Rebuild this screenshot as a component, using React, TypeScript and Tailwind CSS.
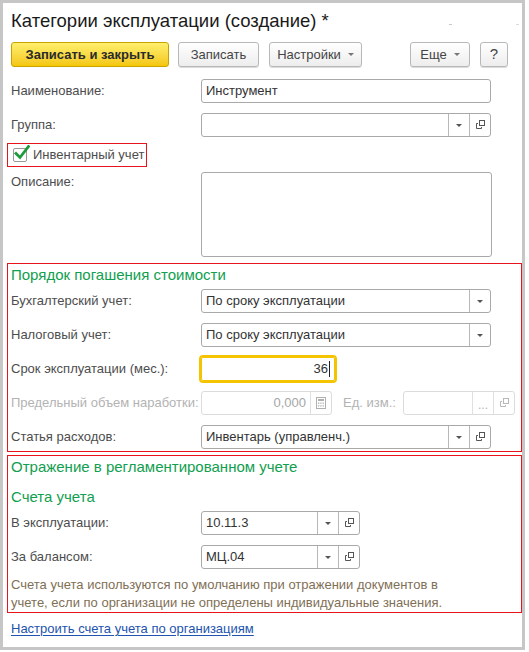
import React from 'react';

const FONT = { fontFamily: '"Liberation Sans", Arial, sans-serif' };

const Arrow = ({ color = '#555' }: { color?: string }) => (
  <svg width="6" height="3" viewBox="0 0 6 3">
    <path d="M0 0 H6 L3 3 Z" fill={color} />
  </svg>
);

const OpenIcon = ({ color = '#555' }: { color?: string }) => (
  <svg width="12" height="12" viewBox="0 0 12 12" fill="none" stroke={color} strokeWidth="1">
    <rect x="5.5" y="1.5" width="5" height="5" />
    <path d="M4 4.5 H2.5 V9.5 H7.5 V8" />
  </svg>
);

const CalcIcon = () => (
  <svg width="10" height="12" viewBox="0 0 10 12" fill="none">
    <rect x="0.5" y="0.5" width="9" height="11" stroke="#b0b0b0" />
    <rect x="2" y="2" width="6" height="2" fill="#b0b0b0" />
    <rect x="2" y="5.5" width="1.3" height="1.3" fill="#b0b0b0" />
    <rect x="4.3" y="5.5" width="1.3" height="1.3" fill="#b0b0b0" />
    <rect x="6.6" y="5.5" width="1.3" height="1.3" fill="#b0b0b0" />
    <rect x="2" y="8.2" width="1.3" height="1.3" fill="#b0b0b0" />
    <rect x="4.3" y="8.2" width="1.3" height="1.3" fill="#b0b0b0" />
    <rect x="6.6" y="8.2" width="1.3" height="1.3" fill="#b0b0b0" />
  </svg>
);

const Label = ({ children, muted = false, w = 'w-[190px]' }: { children: React.ReactNode; muted?: boolean; w?: string }) => (
  <div className={`${w} shrink-0 text-[13px] leading-[16px] ${muted ? 'text-[#b3b3b3]' : 'text-[#4d4d4d]'}`}>{children}</div>
);

const BtnCell = ({ children, disabled = false }: { children: React.ReactNode; disabled?: boolean }) => (
  <div className={`w-[21px] h-full shrink-0 flex items-center justify-center border-l ${disabled ? 'border-[#e0e0e0]' : 'border-[#b8b8b8]'}`}>
    {children}
  </div>
);

const Field = ({
  w,
  value = '',
  dropdown = false,
  open = false,
  disabled = false,
  right = false,
  extra,
}: {
  w: string;
  value?: string;
  dropdown?: boolean;
  open?: boolean;
  disabled?: boolean;
  right?: boolean;
  extra?: React.ReactNode;
}) => (
  <div
    className={`${w} h-[24px] flex items-stretch rounded-[3px] border bg-white ${
      disabled ? 'border-[#dcdcdc]' : 'border-[#a9a9a9]'
    }`}
  >
    <div
      className={`flex-1 flex items-center px-[4px] text-[13px] ${right ? 'justify-end' : ''} ${
        disabled ? 'text-[#a6a6a6]' : 'text-[#333]'
      }`}
    >
      {value}
    </div>
    {extra}
    {dropdown && (
      <BtnCell>
        <Arrow />
      </BtnCell>
    )}
    {open && (
      <BtnCell disabled={disabled}>
        <OpenIcon color={disabled ? '#b8b8b8' : '#555'} />
      </BtnCell>
    )}
  </div>
);

const Row = ({ children, className = '' }: { children: React.ReactNode; className?: string }) => (
  <div className={`flex items-center ${className}`}>{children}</div>
);

const Heading = ({ children, className = '' }: { children: React.ReactNode; className?: string }) => (
  <div className={`text-[15px] leading-[18px] text-[#11a04f] ${className}`}>{children}</div>
);

const GrayButton = ({ children, w, className = '' }: { children: React.ReactNode; w: string; className?: string }) => (
  <button
    className={`${w} h-[25px] shrink-0 flex items-center justify-center gap-[7px] rounded-[3px] border border-[#b8b8b8] bg-linear-to-b from-white to-[#ededed] text-[13px] text-[#444] shadow-[0_1px_0_#dcdcdc] ${className}`}
  >
    {children}
  </button>
);

export default function App() {
  return (
    <div className="w-[529px] h-[652px] bg-white" style={FONT}>
      <div className="w-[525px] h-[650px] border-[3px] border-[#c6c6c6] bg-white flex flex-col">
        {/* Title */}
        <div className="h-[39px] pt-[7px] pl-[8px] flex items-start">
          <div className="text-[18.5px] leading-[22px] text-[#1a1a1a]">Категории эксплуатации (создание) *</div>
          <div className="ml-[120px] mt-[14px] w-[3px] h-[1px] bg-[#c8c8c8]" />
          <div className="ml-[64px] mt-[14px] w-[3px] h-[1px] bg-[#dadada]" />
        </div>

        {/* Toolbar */}
        <div className="h-[25px] pl-[8px] flex items-center">
          <button className="w-[158px] h-[25px] shrink-0 rounded-[3px] border border-[#c9a400] bg-linear-to-b from-[#fff06a] to-[#f4c600] text-[13px] font-bold text-[#2b2b2b]">
            Записать и закрыть
          </button>
          <GrayButton w="w-[81px]" className="ml-[9px]">
            Записать
          </GrayButton>
          <GrayButton w="w-[93px]" className="ml-[10px]">
            Настройки <Arrow color="#777" />
          </GrayButton>
          <div className="flex-1" />
          <GrayButton w="w-[60px]">
            Еще <Arrow color="#777" />
          </GrayButton>
          <GrayButton w="w-[28px]" className="ml-[10px] mr-[14px] text-[15px] text-[#333]">
            ?
          </GrayButton>
        </div>

        {/* Main fields */}
        <div className="pl-[8px]">
          <Row className="mt-[12px]">
            <Label>Наименование:</Label>
            <Field w="w-[290px]" value="Инструмент" />
          </Row>
          <Row className="mt-[10px]">
            <Label>Группа:</Label>
            <Field w="w-[290px]" dropdown open />
          </Row>
        </div>

        <div className="mt-[6px] ml-[4px] w-[140px] h-[24px] border border-[#e8141c] flex items-center pl-[5px]">
          <div className="relative w-[14px] h-[14px] border border-[#9a9a9a] rounded-[2px] bg-white shrink-0">
            <svg className="absolute -top-[4px] left-[0px]" width="16" height="16" viewBox="0 0 16 16" fill="none">
              <path d="M2 8.5 L6 12.5 L14.5 1.5" stroke="#1c9a3c" strokeWidth="2.8" strokeLinecap="square" />
            </svg>
          </div>
          <span className="ml-[6px] text-[13px] text-[#4d4d4d]">Инвентарный учет</span>
        </div>

        <div className="pl-[8px] mt-[5px] flex items-start">
          <div className="w-[190px] shrink-0 pt-[2px]">
            <Label>Описание:</Label>
          </div>
          <div className="w-[291px] h-[85px] rounded-[3px] border border-[#a9a9a9] bg-white" />
        </div>

        {/* Порядок погашения стоимости */}
        <div className="mt-[6px] ml-[4px] h-[189px] border border-[#e8141c] pl-[3px] pt-[2px]">
          <Heading>Порядок погашения стоимости</Heading>
          <Row className="mt-[5px]">
            <Label>Бухгалтерский учет:</Label>
            <Field w="w-[290px]" value="По сроку эксплуатации" dropdown />
          </Row>
          <Row className="mt-[10px]">
            <Label>Налоговый учет:</Label>
            <Field w="w-[290px]" value="По сроку эксплуатации" dropdown />
          </Row>
          <Row className="mt-[10px]">
            <Label>Срок эксплуатации (мес.):</Label>
            <div className="w-[134px] h-[24px] flex items-center justify-end pr-[4px] rounded-[2px] border border-[#f5c400] ring-2 ring-[#f5c400] text-[13px] text-[#333]">
              36<span className="ml-[1px] w-[1px] h-[16px] bg-[#222]" />
            </div>
          </Row>
          <Row className="mt-[10px]">
            <Label muted>Предельный объем наработки:</Label>
            <Field
              w="w-[131px]"
              value="0,000"
              right
              disabled
              extra={
                <div className="w-[21px] h-full shrink-0 flex items-center justify-center border-l border-[#e0e0e0]">
                  <CalcIcon />
                </div>
              }
            />
            <div className="ml-[11px]">
              <Label muted w="w-[60px]">Ед. изм.:</Label>
            </div>
            <Field
              w="w-[112px]"
              disabled
              open
              extra={
                <div className="w-[21px] h-full shrink-0 flex items-center justify-center border-l border-[#e0e0e0] text-[12px] text-[#b3b3b3] pt-[3px]">
                  ...
                </div>
              }
            />
          </Row>
          <Row className="mt-[10px]">
            <Label>Статья расходов:</Label>
            <Field w="w-[290px]" value="Инвентарь (управленч.)" dropdown open />
          </Row>
        </div>

        {/* Отражение в регламентированном учете */}
        <div className="mt-[3px] ml-[4px] border border-[#e8141c] pl-[3px] pt-[2px]">
          <Heading>Отражение в регламентированном учете</Heading>
          <Heading className="mt-[12px]">Счета учета</Heading>
          <Row className="mt-[5px]">
            <Label>В эксплуатации:</Label>
            <Field w="w-[159px]" value="10.11.3" dropdown open />
          </Row>
          <Row className="mt-[10px]">
            <Label>За балансом:</Label>
            <Field w="w-[159px]" value="МЦ.04" dropdown open />
          </Row>
          <div className="mt-[7px] text-[13px] leading-[18px] text-[#7f6f55]">
            Счета учета используются по умолчанию при отражении документов в
            <br />
            учете, если по организации не определены индивидуальные значения.
          </div>
        </div>

        <div className="mt-[7px] pl-[8px] text-[13px] leading-[18px]">
          <a className="text-[#2253ae] underline underline-offset-2" href="#">
            Настроить счета учета по организациям
          </a>
        </div>
      </div>
    </div>
  );
}
